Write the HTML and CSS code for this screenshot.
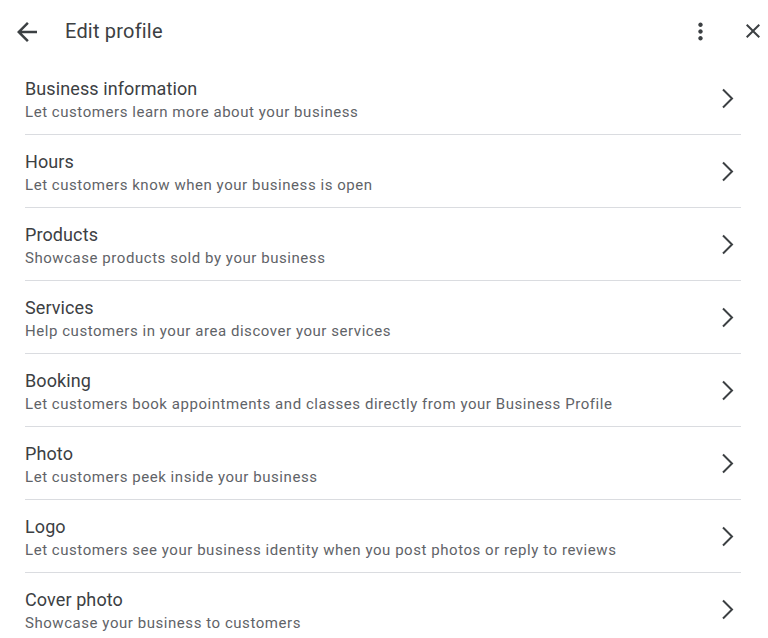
FILE: index.html
```html
<!DOCTYPE html>
<html>
<head>
<meta charset="utf-8">
<link rel="stylesheet" href="styles.css">
</head>
<body>
<div class="dialog">
  <header class="topbar">
    <button class="icon-btn back" aria-label="Back">
      <svg width="30" height="30" viewBox="0 0 24 24"><path d="M20 11H7.83l5.59-5.59L12 4l-8 8 8 8 1.41-1.41L7.83 13H20v-2z" fill="#3c4043"/></svg>
    </button>
    <h1 class="title">Edit profile</h1>
    <button class="icon-btn more" aria-label="More">
      <svg width="27" height="27" viewBox="0 0 24 24"><path d="M12 8c1.1 0 2-.9 2-2s-.9-2-2-2-2 .9-2 2 .9 2 2 2zm0 2c-1.1 0-2 .9-2 2s.9 2 2 2 2-.9 2-2-.9-2-2-2zm0 6c-1.1 0-2 .9-2 2s.9 2 2 2 2-.9 2-2-.9-2-2-2z" fill="#3c4043"/></svg>
    </button>
    <button class="icon-btn close" aria-label="Close">
      <svg width="24" height="24" viewBox="0 0 24 24"><path d="M19 6.41L17.59 5 12 10.59 6.41 5 5 6.41 10.59 12 5 17.59 6.41 19 12 13.41 17.59 19 19 17.59 13.41 12z" fill="#3c4043"/></svg>
    </button>
  </header>
  <ul class="list">
    <li class="row"><div class="text"><div class="row-title">Business information</div><div class="row-sub">Let customers learn more about your business</div></div><svg class="chev" width="20" height="24" viewBox="0 0 20 24"><polyline points="6,2.5 15,11.5 6,20.5" fill="none" stroke="#3c4043" stroke-width="2"/></svg></li>
    <li class="row"><div class="text"><div class="row-title">Hours</div><div class="row-sub">Let customers know when your business is open</div></div><svg class="chev" width="20" height="24" viewBox="0 0 20 24"><polyline points="6,2.5 15,11.5 6,20.5" fill="none" stroke="#3c4043" stroke-width="2"/></svg></li>
    <li class="row"><div class="text"><div class="row-title">Products</div><div class="row-sub">Showcase products sold by your business</div></div><svg class="chev" width="20" height="24" viewBox="0 0 20 24"><polyline points="6,2.5 15,11.5 6,20.5" fill="none" stroke="#3c4043" stroke-width="2"/></svg></li>
    <li class="row"><div class="text"><div class="row-title">Services</div><div class="row-sub">Help customers in your area discover your services</div></div><svg class="chev" width="20" height="24" viewBox="0 0 20 24"><polyline points="6,2.5 15,11.5 6,20.5" fill="none" stroke="#3c4043" stroke-width="2"/></svg></li>
    <li class="row"><div class="text"><div class="row-title">Booking</div><div class="row-sub">Let customers book appointments and classes directly from your Business Profile</div></div><svg class="chev" width="20" height="24" viewBox="0 0 20 24"><polyline points="6,2.5 15,11.5 6,20.5" fill="none" stroke="#3c4043" stroke-width="2"/></svg></li>
    <li class="row"><div class="text"><div class="row-title">Photo</div><div class="row-sub">Let customers peek inside your business</div></div><svg class="chev" width="20" height="24" viewBox="0 0 20 24"><polyline points="6,2.5 15,11.5 6,20.5" fill="none" stroke="#3c4043" stroke-width="2"/></svg></li>
    <li class="row"><div class="text"><div class="row-title">Logo</div><div class="row-sub">Let customers see your business identity when you post photos or reply to reviews</div></div><svg class="chev" width="20" height="24" viewBox="0 0 20 24"><polyline points="6,2.5 15,11.5 6,20.5" fill="none" stroke="#3c4043" stroke-width="2"/></svg></li>
    <li class="row"><div class="text"><div class="row-title">Cover photo</div><div class="row-sub">Showcase your business to customers</div></div><svg class="chev" width="20" height="24" viewBox="0 0 20 24"><polyline points="6,2.5 15,11.5 6,20.5" fill="none" stroke="#3c4043" stroke-width="2"/></svg></li>
  </ul>
</div>
</body>
</html>
```
FILE: styles.css
```css
* { box-sizing: border-box; }
html, body { margin: 0; padding: 0; background: #ffffff; }
body {
  font-family: Roboto, "Liberation Sans", Arial, sans-serif;
  color: #3c4043;
  width: 768px;
  height: 638px;
  overflow: hidden;
}
.dialog { width: 768px; }
.topbar {
  height: 62px;
  display: flex;
  align-items: center;
  padding: 0 0 0 12px;
}
.icon-btn {
  border: 0;
  background: none;
  padding: 0;
  margin: 0;
  display: flex;
  align-items: center;
  justify-content: center;
  cursor: pointer;
}
.back { width: 30px; height: 30px; margin-top: 2px; }
.title {
  margin: 0 0 0 23px;
  font-size: 20px;
  font-weight: 400;
  line-height: 28px;
  letter-spacing: 0.2px;
  color: #3c4043;
  flex: 1;
}
.more { width: 27px; height: 27px; margin-right: 27px; }
.close { width: 24px; height: 24px; margin-right: 3px; }
.list {
  list-style: none;
  margin: 0;
  padding: 0 27px 0 25px;
}
.row {
  display: flex;
  align-items: center;
  padding: 16px 0 11px;
  border-bottom: 1px solid #dadce0;
}
.row:last-child { border-bottom: 0; }
.text { flex: 1; }
.row-title {
  font-size: 18px;
  line-height: 22px;
  letter-spacing: 0.1px;
  color: #3c4043;
}
.row-sub {
  font-size: 15px;
  line-height: 22px;
  padding-top: 1px;
  color: #5f6368;
  letter-spacing: 0.55px;
}
.chev { margin-right: 4px; margin-top: -4px; }
```
